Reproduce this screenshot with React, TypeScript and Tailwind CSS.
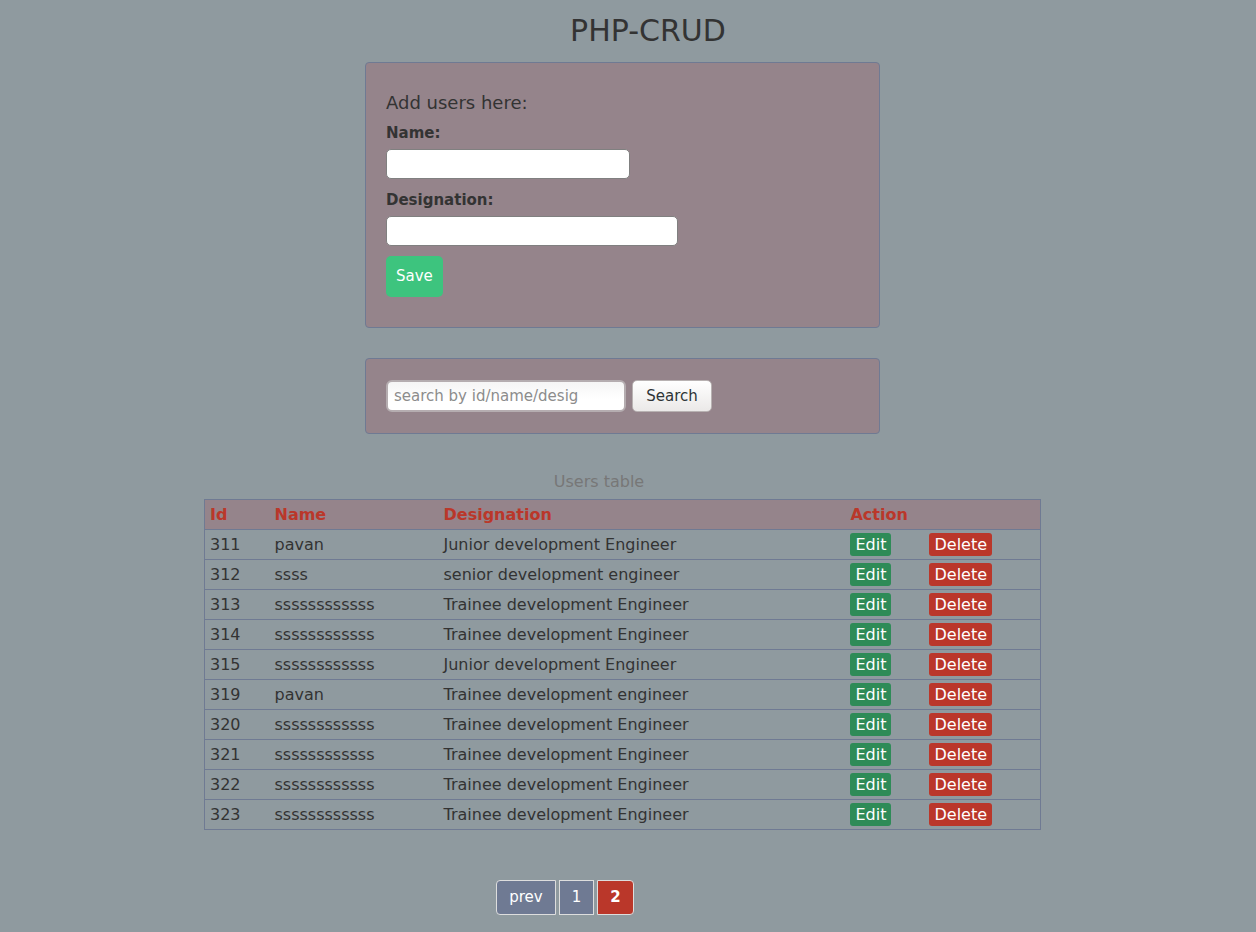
import React from 'react';

type User = { id: number; name: string; designation: string };

const users: User[] = [
  { id: 311, name: 'pavan', designation: 'Junior development Engineer' },
  { id: 312, name: 'ssss', designation: 'senior development engineer' },
  { id: 313, name: 'ssssssssssss', designation: 'Trainee development Engineer' },
  { id: 314, name: 'ssssssssssss', designation: 'Trainee development Engineer' },
  { id: 315, name: 'ssssssssssss', designation: 'Junior development Engineer' },
  { id: 319, name: 'pavan', designation: 'Trainee development engineer' },
  { id: 320, name: 'ssssssssssss', designation: 'Trainee development Engineer' },
  { id: 321, name: 'ssssssssssss', designation: 'Trainee development Engineer' },
  { id: 322, name: 'ssssssssssss', designation: 'Trainee development Engineer' },
  { id: 323, name: 'ssssssssssss', designation: 'Trainee development Engineer' },
];

const panel = 'mx-auto w-full max-w-[515px] rounded border border-[#6f7a93] bg-[#95848b] px-5';
const field = 'block h-[30px] max-w-full rounded-[5px] border border-[#808080] bg-white px-2';

function AddUserForm() {
  return (
    <form className={`${panel} mt-[13px] pt-[30px] pb-[30px]`} onSubmit={(e) => e.preventDefault()}>
      <h2 className="mb-2.5 text-lg leading-5">Add users here:</h2>
      <label htmlFor="name" className="mb-1.5 block font-bold leading-5">
        Name:
      </label>
      <input id="name" type="text" className={`${field} w-[244px]`} />
      <label htmlFor="designation" className="mt-[11px] mb-1.5 block font-bold leading-5">
        Designation:
      </label>
      <input id="designation" type="text" className={`${field} w-[292px]`} />
      <button type="submit" className="mt-2.5 block h-[41px] rounded-[5px] bg-[#3dc47e] px-2.5 text-white">
        Save
      </button>
    </form>
  );
}

function SearchForm() {
  return (
    <form
      className={`${panel} mt-[30px] flex items-start gap-1.5 pt-[21px] pb-[21px]`}
      onSubmit={(e) => e.preventDefault()}
    >
      <input
        type="text"
        aria-label="Search users"
        placeholder="search by id/name/desig"
        className="h-8 w-60 min-w-0 rounded-md border-2 border-[#b5adb0] bg-linear-to-b from-[#f4f4f4] to-white to-60% bg-origin-border px-1.5 placeholder:text-[#8c8c8c]"
      />
      <button
        type="submit"
        className="h-8 w-20 rounded-[5px] border border-[#b8b2b2] bg-linear-to-b from-white to-[#ebe9e8] text-[#2e3436]"
      >
        Search
      </button>
    </form>
  );
}

function UsersTable() {
  return (
    <table className="mx-auto mt-[38px] w-full max-w-[837px] table-fixed border-collapse border border-[#6f7a93] text-left text-base leading-5">
      <caption className="pr-[47px] pb-[7px] text-center text-[#777]">Users table</caption>
      <colgroup>
        <col className="w-[65px]" />
        <col className="w-[169px]" />
        <col />
        <col className="w-[79px]" />
        <col className="w-[116px]" />
      </colgroup>
      <thead>
        <tr className="h-[30px] border-b border-[#6f7a93] bg-[#95848b] text-[#ba372a]">
          <th className="px-[5px]">Id</th>
          <th className="px-[5px]">Name</th>
          <th className="px-[5px]">Designation</th>
          <th className="px-[5px]" colSpan={2}>Action</th>
        </tr>
      </thead>
      <tbody>
        {users.map((u) => (
          <tr key={u.id} className="h-[30px] border-b border-[#6f7a93]">
            <td className="px-[5px]">{u.id}</td>
            <td className="px-[5px]">{u.name}</td>
            <td className="px-[5px]">{u.designation}</td>
            <td className="px-[5px]">
              <a href="#edit" className="block w-fit rounded-[3px] bg-[#2e8b57] px-[5px] leading-[23px] text-white">
                Edit
              </a>
            </td>
            <td className="px-[5px]">
              <a href="#delete" className="block w-fit rounded-[3px] bg-[#ba372a] px-[5px] leading-[23px] text-white">
                Delete
              </a>
            </td>
          </tr>
        ))}
      </tbody>
    </table>
  );
}

function Pagination() {
  const item = 'flex h-[35px] items-center border border-[#ddd] px-3 text-white';
  return (
    <nav aria-label="Pages" className="mt-[50px] mr-[115px] flex justify-center gap-[3px]">
      <a href="#prev" className={`${item} rounded-l bg-[#6f7a93]`}>prev</a>
      <a href="#page-1" className={`${item} bg-[#6f7a93]`}>1</a>
      <a href="#page-2" aria-current="page" className={`${item} rounded-r bg-[#ba372a] font-bold`}>2</a>
    </nav>
  );
}

export default function App() {
  return (
    <div className="min-h-screen bg-[#8f9a9f] pt-[13px] pb-4 pr-[11px] font-['DejaVu_Sans',sans-serif] text-[15px] text-[#333]">
      <h1 className="pl-[51px] text-center text-3xl leading-9">PHP-CRUD</h1>
      <AddUserForm />
      <SearchForm />
      <UsersTable />
      <Pagination />
    </div>
  );
}
